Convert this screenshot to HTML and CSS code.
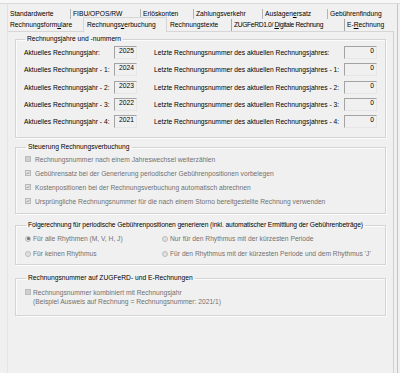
FILE: index.html
```html
<!DOCTYPE html>
<html lang="de">
<head>
<meta charset="utf-8">
<title>Rechnungsverbuchung</title>
<link rel="stylesheet" href="styles.css">
</head>
<body>
<div class="top"></div>
<div class="window">
  <div class="frame">
    <div class="tabs">
      <div class="tabrow row1">
        <span class="tab t1">Standardwerte</span>
        <span class="tab t2 sep">FIB<u>U</u>/OPOS/RW</span>
        <span class="tab t3 sep">Erlös<u>k</u>onten</span>
        <span class="tab t4 sep">Zahlungsverkehr</span>
        <span class="tab t5 sep">Auslagen<u>e</u>rsatz</span>
        <span class="tab t6 sep">Gebührenfindung</span>
      </div>
      <div class="tabrow row2">
        <span class="tab r1">Rechnungsform<u>u</u>lare</span>
        <span class="tab r2 active">Rechnungs<u>v</u>erbuchung</span>
        <span class="tab r3">Rechnungstexte</span>
        <span class="tab r4 sep">ZUGFeRD1.0/ <u>D</u>igitale Rechnung</span>
        <span class="tab r5 sep">E-<u>R</u>echnung</span>
      </div>
    </div>
    <div class="panel">
      <fieldset class="group g1">
        <legend>Rechnungsjahre und -nummern</legend>
        <div class="yeargrid">
          <span class="lbl">Aktuelles Rechnungsjahr:</span><span class="box yb">2025</span><span class="lbl lbl2">Letzte Rechnungsnummer des aktuellen Rechnungsjahres:</span><span class="box nb">0</span>
          <span class="lbl">Aktuelles Rechnungsjahr - 1:</span><span class="box yb">2024</span><span class="lbl lbl2">Letzte Rechnungsnummer des aktuellen Rechnungsjahres - 1:</span><span class="box nb">0</span>
          <span class="lbl">Aktuelles Rechnungsjahr - 2:</span><span class="box yb">2023</span><span class="lbl lbl2">Letzte Rechnungsnummer des aktuellen Rechnungsjahres - 2:</span><span class="box nb">0</span>
          <span class="lbl">Aktuelles Rechnungsjahr - 3:</span><span class="box yb">2022</span><span class="lbl lbl2">Letzte Rechnungsnummer des aktuellen Rechnungsjahres - 3:</span><span class="box nb">0</span>
          <span class="lbl">Aktuelles Rechnungsjahr - 4:</span><span class="box yb">2021</span><span class="lbl lbl2">Letzte Rechnungsnummer des aktuellen Rechnungsjahres - 4:</span><span class="box nb">0</span>
        </div>
      </fieldset>

      <fieldset class="group g2">
        <legend>Steuerung Rechnungsverbuchung</legend>
        <div class="check"><span class="cb empty"></span><span class="dis">Rechnungsnummer nach einem Jahreswechsel weiterzählen</span></div>
        <div class="check"><span class="cb"><svg viewBox="0 0 6 6" width="6" height="6"><polyline points="1,3 2.4,4.5 5,1.3" fill="none" stroke="#8a8a8a" stroke-width="1.2"/></svg></span><span class="dis">Gebührensatz bei der Generierung periodischer Gebührenpositionen vorbelegen</span></div>
        <div class="check"><span class="cb"><svg viewBox="0 0 6 6" width="6" height="6"><polyline points="1,3 2.4,4.5 5,1.3" fill="none" stroke="#8a8a8a" stroke-width="1.2"/></svg></span><span class="dis">Kostenpositionen bei der Rechnungsverbuchung automatisch abrechnen</span></div>
        <div class="check"><span class="cb"><svg viewBox="0 0 6 6" width="6" height="6"><polyline points="1,3 2.4,4.5 5,1.3" fill="none" stroke="#8a8a8a" stroke-width="1.2"/></svg></span><span class="dis">Ursprüngliche Rechnungsnummer für die nach einem Storno bereitgestellte Rechnung verwenden</span></div>
      </fieldset>

      <fieldset class="group g3">
        <legend class="tight">Folgerechnung für periodische Gebührenpositionen generieren (inkl. automatischer Ermittlung der Gebührenbeträge)</legend>
        <div class="radiogrid">
          <div class="radio"><span class="rb on"></span><span class="dis">Für alle Rhythmen (M, V, H, J)</span></div>
          <div class="radio"><span class="rb"></span><span class="dis">Nur für den Rhythmus mit der kürzesten Periode</span></div>
          <div class="radio"><span class="rb"></span><span class="dis">Für keinen Rhythmus</span></div>
          <div class="radio"><span class="rb"></span><span class="dis">Für den Rhythmus mit der kürzesten Periode und dem Rhythmus 'J'</span></div>
        </div>
      </fieldset>

      <fieldset class="group g4">
        <legend>Rechnungsnummer auf ZUGFeRD- und E-Rechnungen</legend>
        <div class="check check4"><span class="cb empty"></span><span class="dis">Rechnungsnummer kombiniert mit Rechnungsjahr</span></div>
        <div class="note dis">(Beispiel Ausweis auf Rechnung = Rechnungsnummer: 2021/1)</div>
      </fieldset>
    </div>
  </div>
  <div class="edge"></div>
</div>
</body>
</html>
```

FILE: styles.css
```css
* { box-sizing: border-box; }
html, body {
  margin: 0;
  padding: 0;
  width: 400px;
  height: 373px;
  overflow: hidden;
  background: #f0f0f0;
  font-family: "Liberation Sans", Arial, sans-serif;
  font-size: 6.7px;
  color: #000;
}
.top {
  height: 4px;
  background: #f7f7f7;
  border-bottom: 1px solid #dadada;
}
.window {
  display: flex;
  height: 369px;
}
.frame {
  width: 387px;
  margin-left: 7px;
  display: flex;
  flex-direction: column;
}
.edge {
  width: 3px;
  margin-left: 3px;
  border-left: 1px solid #c4c4c4;
}
.tabs {
  padding-top: 5px;
  border-left: 1px solid #e2e2e2;
}
.tabrow {
  display: flex;
  white-space: nowrap;
}
.row1 { height: 10px; line-height: 10px; }
.row2 { height: 12px; line-height: 12px; }
.tab {
  display: block;
  padding-left: 2px;
  position: relative;
}
.tab u { text-decoration-thickness: 0.6px; text-underline-offset: 1px; }
.sep { border-left: 1px solid #a8a8a8; padding-left: 2px; }
.row1 .sep { border-left-color: #b4b4b4; }
.t1 { width: 62px; }
.t2 { width: 70px; }
.t3 { width: 53px; }
.t4 { width: 69px; }
.t5 { width: 65px; }
.t6 { width: 65px; }
.r1 { width: 75px; }
.r2 { width: 84px; }
.r3 { width: 64px; padding-left: 3px; }
.r4 { width: 113px; letter-spacing: -0.35px; }
.r5 { width: 48px; }
.active {
  margin-top: -2px;
  height: 15px;
  line-height: 13px;
  padding-left: 3px;
  border: 1px solid #d6d6d6;
  border-bottom: none;
  background: #f0f0f0;
  z-index: 1;
}
.panel {
  flex: 1;
  border-top: 1px solid #d6d6d6;
  border-left: 1px solid #e4e4e4;
  border-right: 1px solid #d0d0d0;
  padding: 2px 7px 0 7px;
}
.group {
  margin: 0;
  padding: 0 0 0 8px;
  border: 1px solid #d4d4d4;
  box-shadow: inset 1px 1px 0 #fbfbfb, 1px 1px 0 #fbfbfb;
  min-width: 0;
}
.group legend {
  padding: 0 2px;
  margin-left: 1px;
  line-height: 10px;
  white-space: nowrap;
}
.group legend.tight { letter-spacing: -0.1px; }
.g1 { padding-bottom: 7px; }
.g2 { margin-top: 4px; padding-left: 9px; padding-bottom: 5px; }
.g3 { margin-top: 6px; padding-left: 9px; padding-top: 1px; padding-bottom: 3px; }
.g4 { margin-top: 8px; padding-left: 9px; padding-top: 4px; padding-bottom: 8px; }

.yeargrid {
  display: grid;
  grid-template-columns: 90px 23px 17px 190px 33px;
  grid-auto-rows: 17.25px;
  align-items: center;
}
.yeargrid .lbl { white-space: nowrap; }
.lbl2 { grid-column: 4; }
.box {
  height: 13px;
  border-top: 1px solid #a3a3a3;
  border-left: 1px solid #a3a3a3;
  border-right: 1px solid #e6e6e6;
  border-bottom: 1px solid #e6e6e6;
  background: #f0f0f0;
  text-align: right;
  padding-right: 2px;
  line-height: 8px;
}
.dis { color: #707070; }
.check {
  display: flex;
  align-items: center;
  height: 14px;
  white-space: nowrap;
}
.cb {
  flex: none;
  width: 6px;
  height: 6px;
  margin-right: 4px;
  border: 1px solid #b8b8b8;
  background: #e2e2e2;
  display: flex;
  align-items: center;
  justify-content: center;
}
.cb svg { display: block; }
.cb.empty { background: #cfcfcf; border-color: #bdbdbd; }
.check4 { height: 10px; }
.check4 .cb { margin-right: 2px; }
.note { padding-left: 8px; line-height: 10px; white-space: nowrap; }
.radiogrid {
  display: grid;
  grid-template-columns: 137px 1fr;
  grid-auto-rows: 15px;
  align-items: center;
}
.radio {
  display: flex;
  align-items: center;
  white-space: nowrap;
}
.rb {
  flex: none;
  width: 6px;
  height: 6px;
  border-radius: 50%;
  border: 1px solid #bcbcbc;
  background: #e0e0e0;
  margin-right: 2px;
  display: flex;
  align-items: center;
  justify-content: center;
}
.rb.on::after {
  content: "";
  width: 3px;
  height: 3px;
  border-radius: 50%;
  background: #6e6e6e;
}
```
